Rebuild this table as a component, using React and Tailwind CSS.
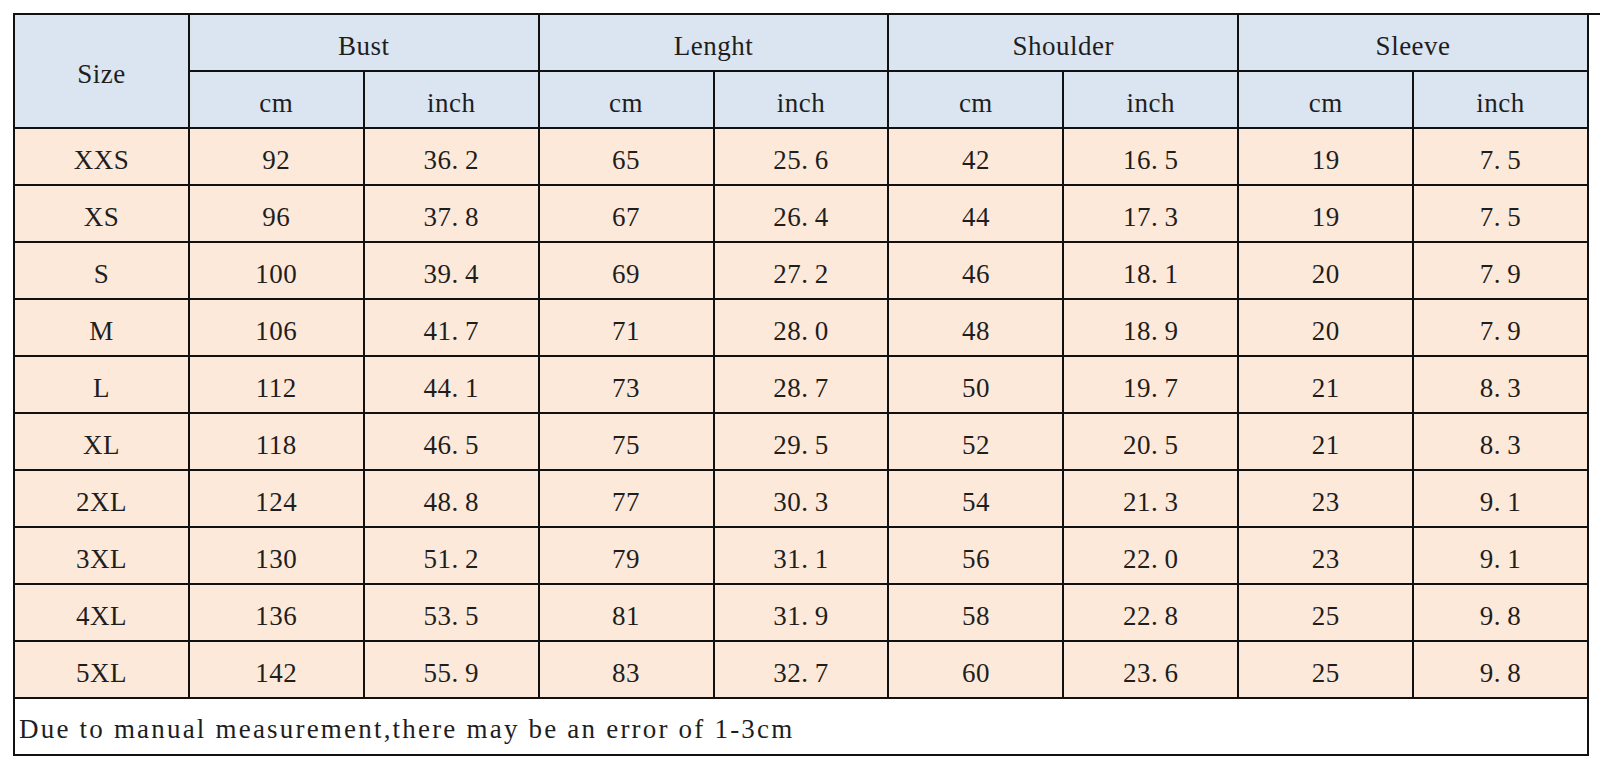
import React from "react";

const groups = ["Bust", "Lenght", "Shoulder", "Sleeve"];
const rows = [
  ["XXS", "92", "36.2", "65", "25.6", "42", "16.5", "19", "7.5"],
  ["XS", "96", "37.8", "67", "26.4", "44", "17.3", "19", "7.5"],
  ["S", "100", "39.4", "69", "27.2", "46", "18.1", "20", "7.9"],
  ["M", "106", "41.7", "71", "28.0", "48", "18.9", "20", "7.9"],
  ["L", "112", "44.1", "73", "28.7", "50", "19.7", "21", "8.3"],
  ["XL", "118", "46.5", "75", "29.5", "52", "20.5", "21", "8.3"],
  ["2XL", "124", "48.8", "77", "30.3", "54", "21.3", "23", "9.1"],
  ["3XL", "130", "51.2", "79", "31.1", "56", "22.0", "23", "9.1"],
  ["4XL", "136", "53.5", "81", "31.9", "58", "22.8", "25", "9.8"],
  ["5XL", "142", "55.9", "83", "32.7", "60", "23.6", "25", "9.8"],
];

const cell =
  "border-r-2 border-b-2 border-[#111] flex items-center justify-center pt-[7px] tracking-[0.5px]";

function Val({ v }) {
  const parts = v.split(".");
  if (parts.length === 1) return <span>{v}</span>;
  return (
    <span>
      {parts[0]}
      <span className="inline-block w-[0.5em] text-left">.</span>
      {parts[1]}
    </span>
  );
}

export default function App() {
  return (
    <div
      className="relative w-[1600px] h-[770px] bg-white text-[#1e1e1e] text-[27px] pt-[13px] pl-[13px]"
      style={{ fontFamily: '"Liberation Serif", serif' }}
    >
      <div className="absolute top-[13px] left-[1587px] w-[13px] h-[2px] bg-[#111]" />
      <div className="w-[1576px] border-l-2 border-t-2 border-[#111] grid grid-cols-[repeat(9,minmax(0,1fr))] auto-rows-[57px]">
        <div className={`${cell} row-span-2 bg-[#dbe5f1]`}>Size</div>
        {groups.map((g) => (
          <div key={g} className={`${cell} col-span-2 bg-[#dbe5f1]`}>
            {g}
          </div>
        ))}
        {groups.map((g) => (
          <React.Fragment key={g + "u"}>
            <div className={`${cell} bg-[#dbe5f1]`}>cm</div>
            <div className={`${cell} bg-[#dbe5f1]`}>inch</div>
          </React.Fragment>
        ))}
        {rows.map((r) =>
          r.map((v, i) => (
            <div key={r[0] + i} className={`${cell} bg-[#fde9d9]`}>
              <Val v={v} />
            </div>
          ))
        )}
        <div className="col-span-9 border-r-2 border-b-2 border-[#111] flex items-center pl-[4px] pt-[6px] bg-white tracking-[2.2px]">
          Due to manual measurement,there may be an error of 1-3cm
        </div>
      </div>
    </div>
  );
}
